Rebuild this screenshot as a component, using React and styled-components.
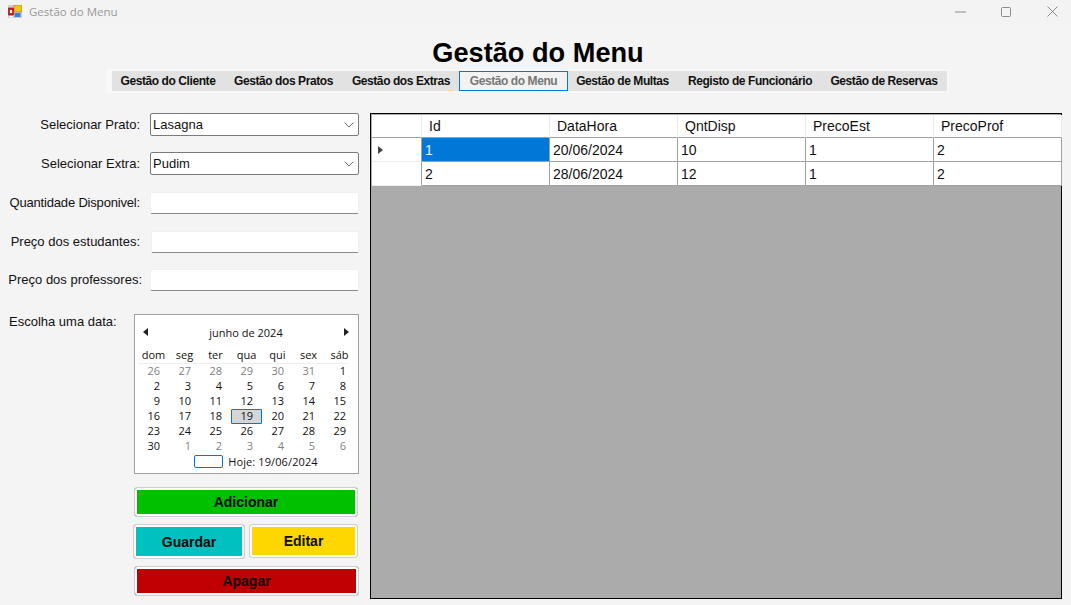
import React from 'react';
import styled, { createGlobalStyle } from 'styled-components';

const Global = createGlobalStyle`
  html, body { margin: 0; padding: 0; background: #f4f4f4; }
  #root { width: 1071px; height: 605px; overflow: hidden; }
  * { box-sizing: border-box; }
`;
const Page = styled.div`
  width: 1071px; height: 605px; background: #f4f4f4; display: flex; flex-direction: column;
  font-family: "Liberation Sans", Arial, sans-serif; color: #000;
`;
const TitleBar = styled.div`
  height: 24px; flex-shrink: 0; background: #f3f3f3; display: flex; align-items: center; padding: 0 0 1px 8px;
  font-family: "Open Sans", sans-serif; font-size: 11.5px; color: #999;
`;
const TitleText = styled.span` margin-left: 7px; flex: 1; `;
const WinControls = styled.div` display: flex; align-items: center; margin-right: -4px; `;
const WinButton = styled.div` width: 46px; height: 22px; display: flex; align-items: center; justify-content: center; `;
const Heading = styled.h1`
  margin: 15px 0 0; height: 30px; flex-shrink: 0; line-height: 28px; text-align: center; font-size: 27.2px; font-weight: 700; padding-left: 5px;
`;
const MenuWrap = styled.div` display: flex; flex-shrink: 0; margin: 0 0 0 106px; `;
const Menu = styled.nav`
  display: flex; align-items: stretch; height: 24px; padding: 2px 2px 2px 6px; background: #f8f8f8; width: 843px;
`;
const MenuInner = styled.div` display: flex; align-items: stretch; background: #e2e2e2; width: 100%; `;
const MenuItem = styled.div`
  width: ${p => p.$w}px; height: 20px; display: flex; align-items: center; justify-content: center;
  font-size: 12px; font-weight: 700; white-space: nowrap; letter-spacing: -0.42px;
  color: ${p => p.$active ? '#777' : '#111'};
  border: ${p => p.$active ? '1px solid #0078d7' : 'none'};
  background: ${p => p.$active ? '#f2f2f2' : 'transparent'};
`;
const Content = styled.div` display: flex; margin-top: 20px; flex: 1; min-height: 0; `;
const Left = styled.div` width: 370px; flex-shrink: 0; display: flex; flex-direction: column; `;
const FormRow = styled.div`
  display: flex; flex-shrink: 0; align-items: center; height: 23px; margin-bottom: ${p => p.$mb ?? 16}px;
`;
const Label = styled.label`
  width: ${p => p.$w || 142}px; text-align: right; font-size: 13px; color: #111; white-space: nowrap;
  padding-right: ${p => p.$pr ?? 2}px; letter-spacing: ${p => p.$ls || 0}px;
`;
const Combo = styled.div`
  margin-left: 8px; width: 209px; height: 23px; background: #fff; border: 1px solid #7a7a7a; border-radius: 2px;
  display: flex; align-items: center; justify-content: space-between; padding: 0 4px 0 2px; font-size: 13px; color: #111;
`;
const TextField = styled.div`
  margin-left: ${p => p.$ml || 8}px; width: ${p => p.$w || 209}px; height: 22px; background: #fff; border: 1px solid #f0f0f0; border-bottom: 1px solid #8a8a8a; border-radius: 2px;
`;
const DateRow = styled.div` display: flex; flex-shrink: 0; height: 160px; `;
const DateLabel = styled.div` width: 134px; font-size: 13px; color: #111; padding: 0 0 0 9px; white-space: nowrap; `;
const Calendar = styled.div`
  width: 225px; height: 160px; background: #fff; border: 1px solid #a0a0a0; padding-top: 10px;
  font-family: "Open Sans", sans-serif; font-size: 11px; color: #111; display: flex; flex-direction: column;
`;
const CalTop = styled.div` display: flex; align-items: center; justify-content: space-between; height: 16px; padding: 0 9px 1px 8px; `;
const CalArrow = styled.span` display: flex; margin-bottom: 2px; `;
const DayHeads = styled.div` display: grid; grid-template-columns: repeat(7, 31px); margin: 6px 0 0 3px; height: 17px; border-bottom: 1px solid #eee; width: 210px; `;
const DayHead = styled.div` text-align: center; line-height: 15px; `;
const Days = styled.div` display: grid; grid-template-columns: repeat(7, 31px); grid-auto-rows: 15px; margin: 0 0 0 3px; `;
const Day = styled.div`
  text-align: right; padding-right: 9px; line-height: 14px;
  color: ${p => p.$muted ? '#808080' : '#111'};
  ${p => p.$today ? 'background: #d6d6d6; outline: 1px solid #0078d7; outline-offset: -1px; border-radius: 1px;' : ''}
`;
const CalFoot = styled.div` display: flex; align-items: center; justify-content: center; height: 15px; padding-left: 19px; letter-spacing: 0.1px; `;
const TodayBox = styled.span` width: 29px; height: 13px; border: 1px solid #0078d7; border-radius: 2px; margin-right: 5px; `;
const Actions = styled.div` display: flex; flex-shrink: 0; flex-direction: column; margin: 13px 0 0 133px; width: 227px; `;
const ActionRow = styled.div` display: flex; gap: 4px; margin: 7px 0; `;
const ActionButton = styled.button`
  flex-shrink: 0; width: ${p => p.$w}px; height: ${p => p.$h}px; margin-left: ${p => p.$ml || 0}px; padding: ${p => p.$pt || 0}px 0 0;
  background: ${p => p.$bg}; border: 1px solid #cfcfcf; box-shadow: inset 0 0 0 2px #fff; border-radius: 3px;
  font-family: "Liberation Sans", Arial, sans-serif; font-size: 14px; font-weight: 700; color: #0a0a0a;
`;
const GridFrame = styled.div`
  width: 692px; height: 486px; border: 1px solid #000; background: #ababab; padding: 1px 0 0 1px; font-size: 14px; color: #111; align-self: flex-start;
`;
const GridTable = styled.div` display: grid; grid-template-columns: 50px repeat(5, 128px); grid-template-rows: 23px 24px 24px; `;
const HeadCell = styled.div`
  background: #fff; border-right: 1px solid #ececec; border-bottom: 1px solid #a0a0a0; padding-left: 7px; display: flex; align-items: center;
`;
const RowHead = styled.div` background: #fff; border-right: 1px solid #a0a0a0; border-bottom: 1px solid #ececec; display: flex; align-items: center; padding-left: 6px; `;
const Cell = styled.div`
  background: ${p => p.$sel ? '#0078d7' : '#fff'}; color: ${p => p.$sel ? '#e8f2fb' : '#111'};
  border-right: 1px solid #a0a0a0; border-bottom: 1px solid #a0a0a0; padding-left: 3px; display: flex; align-items: center;
`;

const Chevron = () => (
  <svg width="10" height="6" viewBox="0 0 10 6" fill="none"><path d="M.7.7 5 5 9.3.7" stroke="#707070" strokeWidth="1" /></svg>
);
const Tri = ({ dir, color = '#222' }) => (
  <svg width="5" height="8" viewBox="0 0 5 8"><path d={dir === 'left' ? 'M5 0v8L0 4z' : 'M0 0v8l5-4z'} fill={color} /></svg>
);
const AppIcon = () => (
  <svg width="14" height="13" viewBox="0 0 14 13">
    <rect width="14" height="13" fill="#cfcfcf" />
    <rect x="6" y="0" width="8" height="7" fill="#f2c322" stroke="#a8801a" strokeWidth=".7" />
    <rect x=".5" y="3" width="5" height="7" fill="#d02020" stroke="#801414" strokeWidth=".6" />
    <rect x="2" y="5" width="2" height="3" fill="#fff" />
    <rect x="6.5" y="8" width="6" height="4" fill="#3d7fe0" />
    <rect x="1" y="11" width="4" height="1.4" fill="#fff" />
  </svg>
);

const menu = [
  ['Gestão do Cliente', 112], ['Gestão dos Pratos', 119], ['Gestão dos Extras', 116],
  ['Gestão do Menu', 109, true], ['Gestão de Multas', 109], ['Registo de Funcionário', 146], ['Gestão de Reservas', 122],
];
const heads = ['dom', 'seg', 'ter', 'qua', 'qui', 'sex', 'sáb'];
const prev = [26, 27, 28, 29, 30, 31];
const next = [1, 2, 3, 4, 5, 6];
const dayList = Array.from({ length: 30 }, (_, i) => i + 1);
const rows = [
  ['1', '20/06/2024', '10', '1', '2'],
  ['2', '28/06/2024', '12', '1', '2'],
];

export default function App() {
  return (
    <Page>
      <Global />
      <TitleBar>
        <AppIcon />
        <TitleText>Gestão do Menu</TitleText>
        <WinControls>
          <WinButton>
            <svg width="11" height="2" viewBox="0 0 11 2"><path d="M0 1h11" stroke="#8a8a8a" /></svg>
          </WinButton>
          <WinButton>
            <svg width="10" height="10" viewBox="0 0 10 10"><rect x=".5" y=".5" width="9" height="9" rx="1" fill="none" stroke="#8a8a8a" /></svg>
          </WinButton>
          <WinButton>
            <svg width="11" height="11" viewBox="0 0 11 11"><path d="M.5.5l10 10M10.5.5l-10 10" stroke="#8a8a8a" /></svg>
          </WinButton>
        </WinControls>
      </TitleBar>
      <Heading>Gestão do Menu</Heading>
      <MenuWrap>
        <Menu>
          <MenuInner>
            {menu.map(([t, w, a]) => <MenuItem key={t} $w={w} $active={a}>{t}</MenuItem>)}
          </MenuInner>
        </Menu>
      </MenuWrap>
      <Content>
        <Left>
          <FormRow><Label>Selecionar Prato:</Label><Combo>Lasagna<Chevron /></Combo></FormRow>
          <FormRow><Label>Selecionar Extra:</Label><Combo>Pudim<Chevron /></Combo></FormRow>
          <FormRow><Label $ls={-0.18}>Quantidade Disponivel:</Label><TextField /></FormRow>
          <FormRow $mb={15}><Label>Preço dos estudantes:</Label><TextField $ml={9} $w={208} /></FormRow>
          <FormRow $mb={23}><Label $pr={0}>Preço dos professores:</Label><TextField /></FormRow>
          <DateRow>
            <DateLabel>Escolha uma data:</DateLabel>
            <Calendar>
              <CalTop>
                <CalArrow><Tri dir="left" /></CalArrow>
                <span>junho de 2024</span>
                <CalArrow><Tri dir="right" /></CalArrow>
              </CalTop>
              <DayHeads>{heads.map(h => <DayHead key={h}>{h}</DayHead>)}</DayHeads>
              <Days>
                {prev.map(d => <Day key={'p' + d} $muted>{d}</Day>)}
                {dayList.map(d => <Day key={d} $today={d === 19}>{d}</Day>)}
                {next.map(d => <Day key={'n' + d} $muted>{d}</Day>)}
              </Days>
              <CalFoot><TodayBox /><span>Hoje: 19/06/2024</span></CalFoot>
            </Calendar>
          </DateRow>
          <Actions>
            <ActionButton $bg="#00c000" $w={224} $h={30} $ml={1}>Adicionar</ActionButton>
            <ActionRow>
              <ActionButton $bg="#00c0c0" $w={112} $h={35} $pt={1}>Guardar</ActionButton>
              <ActionButton $bg="#ffd700" $w={109} $h={34}>Editar</ActionButton>
            </ActionRow>
            <ActionButton $bg="#c00000" $w={225} $h={30} $ml={1}>Apagar</ActionButton>
          </Actions>
        </Left>
        <GridFrame>
          <GridTable>
            <HeadCell />
            {['Id', 'DataHora', 'QntDisp', 'PrecoEst', 'PrecoProf'].map(h => <HeadCell key={h}>{h}</HeadCell>)}
            {rows.map((r, i) => (
              <React.Fragment key={r[0]}>
                <RowHead>{i === 0 && <Tri dir="right" color="#444" />}</RowHead>
                {r.map((c, j) => <Cell key={j} $sel={i === 0 && j === 0}>{c}</Cell>)}
              </React.Fragment>
            ))}
          </GridTable>
        </GridFrame>
      </Content>
    </Page>
  );
}
